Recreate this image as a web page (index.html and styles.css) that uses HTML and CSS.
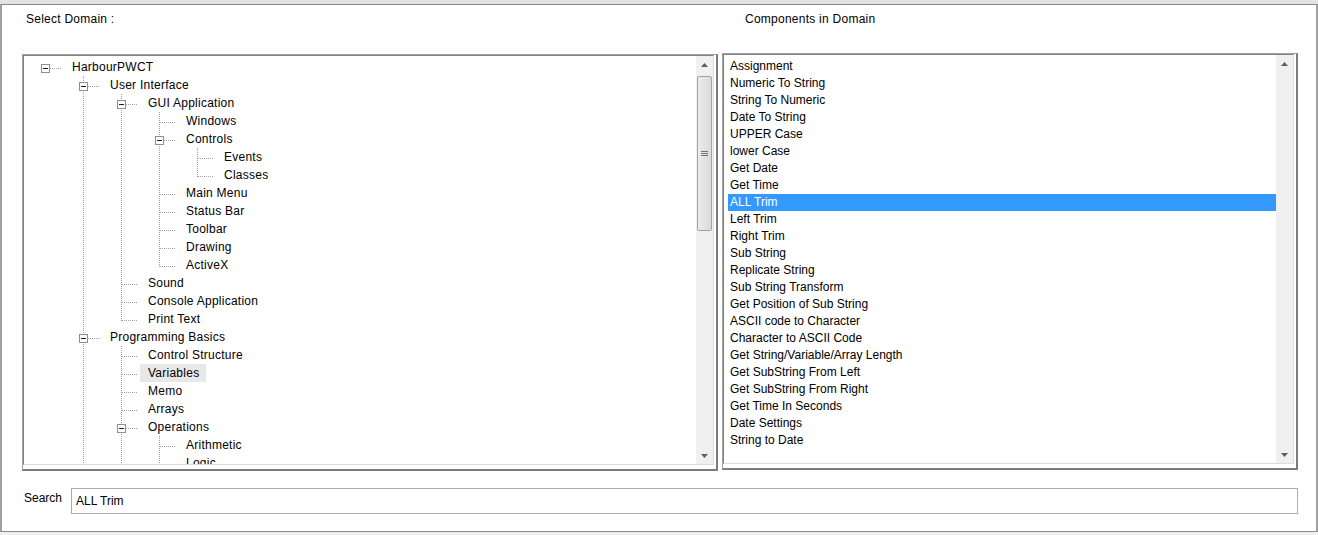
FILE: index.html
```html
<!DOCTYPE html>
<html>
<head>
<meta charset="utf-8">
<title>Select Domain</title>
<link rel="stylesheet" href="styles.css">
</head>
<body>
<div class="topstrip"></div>
<div class="win">
  <div class="grid">
    <div class="hdr hdr-left">Select Domain :</div>
    <div class="hdr hdr-right">Components in Domain</div>

    <div class="panel panel-left">
      <div class="inner">
        <div class="tree">
          <div class="row"><span class="c r"><i class="box"></i></span><span class="label">HarbourPWCT</span></div>
          <div class="row"><span class="c"></span><span class="c t"><i class="box"></i></span><span class="label">User Interface</span></div>
          <div class="row"><span class="c"></span><span class="c v"></span><span class="c t"><i class="box"></i></span><span class="label">GUI Application</span></div>
          <div class="row"><span class="c"></span><span class="c v"></span><span class="c v"></span><span class="c t"></span><span class="label">Windows</span></div>
          <div class="row"><span class="c"></span><span class="c v"></span><span class="c v"></span><span class="c t"><i class="box"></i></span><span class="label">Controls</span></div>
          <div class="row"><span class="c"></span><span class="c v"></span><span class="c v"></span><span class="c v"></span><span class="c t"></span><span class="label">Events</span></div>
          <div class="row"><span class="c"></span><span class="c v"></span><span class="c v"></span><span class="c v"></span><span class="c l"></span><span class="label">Classes</span></div>
          <div class="row"><span class="c"></span><span class="c v"></span><span class="c v"></span><span class="c t"></span><span class="label">Main Menu</span></div>
          <div class="row"><span class="c"></span><span class="c v"></span><span class="c v"></span><span class="c t"></span><span class="label">Status Bar</span></div>
          <div class="row"><span class="c"></span><span class="c v"></span><span class="c v"></span><span class="c t"></span><span class="label">Toolbar</span></div>
          <div class="row"><span class="c"></span><span class="c v"></span><span class="c v"></span><span class="c t"></span><span class="label">Drawing</span></div>
          <div class="row"><span class="c"></span><span class="c v"></span><span class="c v"></span><span class="c l"></span><span class="label">ActiveX</span></div>
          <div class="row"><span class="c"></span><span class="c v"></span><span class="c t"></span><span class="label">Sound</span></div>
          <div class="row"><span class="c"></span><span class="c v"></span><span class="c t"></span><span class="label">Console Application</span></div>
          <div class="row"><span class="c"></span><span class="c v"></span><span class="c l"></span><span class="label">Print Text</span></div>
          <div class="row"><span class="c"></span><span class="c t"><i class="box"></i></span><span class="label">Programming Basics</span></div>
          <div class="row"><span class="c"></span><span class="c v"></span><span class="c t"></span><span class="label">Control Structure</span></div>
          <div class="row"><span class="c"></span><span class="c v"></span><span class="c t"></span><span class="label sel">Variables</span></div>
          <div class="row"><span class="c"></span><span class="c v"></span><span class="c t"></span><span class="label">Memo</span></div>
          <div class="row"><span class="c"></span><span class="c v"></span><span class="c t"></span><span class="label">Arrays</span></div>
          <div class="row"><span class="c"></span><span class="c v"></span><span class="c t"><i class="box"></i></span><span class="label">Operations</span></div>
          <div class="row"><span class="c"></span><span class="c v"></span><span class="c v"></span><span class="c t"></span><span class="label">Arithmetic</span></div>
          <div class="row"><span class="c"></span><span class="c v"></span><span class="c v"></span><span class="c t"></span><span class="label">Logic</span></div>
        </div>
        <div class="sb">
          <div class="sb-btn"><svg width="7" height="4" viewBox="0 0 7 4"><path d="M0 4H7L3.5 0Z" fill="#5e5e5e"/></svg></div>
          <div class="sb-track">
            <div class="thumb"><span class="grip"></span></div>
          </div>
          <div class="sb-btn"><svg width="7" height="4" viewBox="0 0 7 4"><path d="M0 0H7L3.5 4Z" fill="#5e5e5e"/></svg></div>
        </div>
      </div>
    </div>

    <div class="panel panel-right">
      <div class="inner">
        <div class="list">
          <div class="item">Assignment</div>
          <div class="item">Numeric To String</div>
          <div class="item">String To Numeric</div>
          <div class="item">Date To String</div>
          <div class="item">UPPER Case</div>
          <div class="item">lower Case</div>
          <div class="item">Get Date</div>
          <div class="item">Get Time</div>
          <div class="item on">ALL Trim</div>
          <div class="item">Left Trim</div>
          <div class="item">Right Trim</div>
          <div class="item">Sub String</div>
          <div class="item">Replicate String</div>
          <div class="item">Sub String Transform</div>
          <div class="item">Get Position of Sub String</div>
          <div class="item">ASCII code to Character</div>
          <div class="item">Character to ASCII Code</div>
          <div class="item">Get String/Variable/Array Length</div>
          <div class="item">Get SubString From Left</div>
          <div class="item">Get SubString From Right</div>
          <div class="item">Get Time In Seconds</div>
          <div class="item">Date Settings</div>
          <div class="item">String to Date</div>
        </div>
        <div class="sb">
          <div class="sb-btn"><svg width="7" height="4" viewBox="0 0 7 4"><path d="M0 4H7L3.5 0Z" fill="#5e5e5e"/></svg></div>
          <div class="sb-track"></div>
          <div class="sb-btn"><svg width="7" height="4" viewBox="0 0 7 4"><path d="M0 0H7L3.5 4Z" fill="#5e5e5e"/></svg></div>
        </div>
      </div>
    </div>
  </div>

  <div class="search">
    <span class="search-label">Search</span>
    <div class="search-input">ALL Trim</div>
  </div>
</div>
<div class="botstrip"></div>
</body>
</html>
```

FILE: styles.css
```css
* { box-sizing: border-box; }
html, body { margin: 0; padding: 0; }
body {
  width: 1318px;
  height: 535px;
  background: #f0f0f0;
  font: 12px "Liberation Sans", Arial, sans-serif;
  color: #000;
  overflow: hidden;
}
.topstrip { height: 4px; background: #e3e3e3; }
.botstrip { height: 3px; background: #f0f0f0; }
.win {
  height: 528px;
  background: #fff;
  border-top: 1px solid #8a8a8a;
  border-bottom: 1px solid #8a8a8a;
  border-left: 2px solid #a0a0a0;
  border-right: 2px solid #a0a0a0;
  padding: 0 18px 0 20px;
}
.grid {
  display: grid;
  grid-template-columns: 696px 576px;
  grid-template-rows: 48px 418px;
  column-gap: 4px;
}
.hdr { line-height: 14px; padding-top: 7px; letter-spacing: 0.25px; }
.hdr-left { padding-left: 4px; }
.hdr-right { padding-left: 23px; }

.panel {
  height: 417px;
  border-style: solid;
  border-width: 1px 2px 2px 1px;
  border-color: #a0a0a0 #7c7c7c #7c7c7c #a0a0a0;
  padding: 0 2px 4px 0;
}
.panel-left { margin-top: 1px; }
.inner {
  height: 100%;
  display: flex;
  border: 1px solid;
  border-color: #828282 #dcdcdc #dcdcdc #828282;
  background: #fff;
}

/* tree */
.tree { flex: 1; padding: 2px 0 0 2px; overflow: hidden; }
.row { display: flex; height: 18px; }
.c { width: 38px; height: 18px; flex: none; position: relative; }
.v::before, .t::before, .l::before {
  content: "";
  position: absolute;
  left: 19px;
  top: 0;
  width: 1px;
  height: 18px;
  background: repeating-linear-gradient(to bottom, #a0a0a0 0 1px, transparent 1px 2px);
}
.l::before { height: 11px; }
.t::after, .l::after, .r::after {
  content: "";
  position: absolute;
  left: 20px;
  top: 10px;
  width: 16px;
  height: 1px;
  background: repeating-linear-gradient(to right, #a0a0a0 0 1px, transparent 1px 2px);
}
.box {
  position: absolute;
  left: 15px;
  top: 6px;
  width: 9px;
  height: 9px;
  border: 1px solid #8f8f8f;
  background: #fff;
  z-index: 1;
}
.box::after {
  content: "";
  position: absolute;
  left: 1px;
  top: 3px;
  width: 5px;
  height: 1px;
  background: #1e1e1e;
}
.label {
  line-height: 18px;
  padding: 0 7px 0 8px;
  white-space: nowrap;
  letter-spacing: 0.25px;
}
.sel { background: #e8e8e8; }

/* scrollbar */
.sb {
  width: 17px;
  flex: none;
  background: #f0f0f0;
  display: flex;
  flex-direction: column;
}
.sb-btn {
  height: 17px;
  flex: none;
  display: flex;
  align-items: center;
  justify-content: center;
}
.sb-btn svg { display: block; }
.sb-track { flex: 1; padding: 3px 1px 0 1px; }
.thumb {
  height: 155px;
  border: 1px solid #a4a4a4;
  border-radius: 2px;
  background: linear-gradient(to right, #ececec, #dadada);
  display: flex;
  align-items: center;
  justify-content: center;
}
.grip {
  width: 7px;
  height: 5px;
  background: repeating-linear-gradient(to bottom, #727272 0 1px, transparent 1px 2px);
}

/* list */
.list { flex: 1; padding: 3px 0 0 4px; overflow: hidden; }
.item { height: 17px; line-height: 17px; padding-left: 2px; white-space: nowrap; }
.item.on { background: #3399ff; color: #fff; }

/* search */
.search { display: flex; margin-top: 17px; height: 26px; }
.search-label { width: 49px; flex: none; padding: 3px 0 0 2px; line-height: 14px; }
.search-input {
  flex: 1;
  border: 1px solid #acacac;
  padding-left: 4px;
  line-height: 24px;
}
```
